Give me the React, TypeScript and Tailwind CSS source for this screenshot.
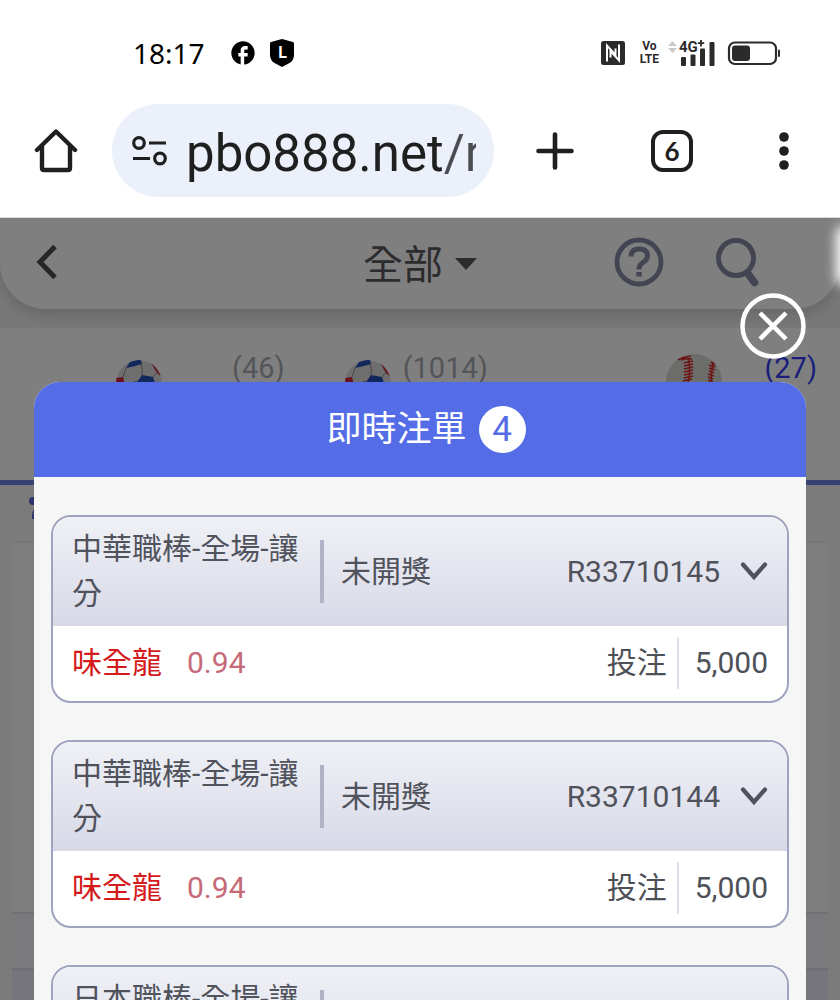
import { useId } from 'react';
import { MdFacebook } from 'react-icons/md';

interface Bet {
  id: string;
  market: string;
  status: string;
  team: string;
  odds: string;
  stake: string;
}

const bets: Bet[] = [
  { id: 'R33710145', market: '中華職棒-全場-讓分', status: '未開獎', team: '味全龍', odds: '0.94', stake: '5,000' },
  { id: 'R33710144', market: '中華職棒-全場-讓分', status: '未開獎', team: '味全龍', odds: '0.94', stake: '5,000' },
  { id: 'R33710143', market: '日本職棒-全場-讓分', status: '未開獎', team: '味全龍', odds: '0.94', stake: '5,000' },
];

function ShieldIcon() {
  return (
    <svg viewBox="0 0 26 30" className="w-[26px] h-[30px]">
      <path d="M13 1 L24 4 Q25 4.300 25 5.500 V17 Q25 22 20.500 25 L13 29 L5.500 25 Q1 22 1 17 V5.500 Q1 4.300 2 4 Z" fill="#000" />
      <text x="13.500" y="20" fontSize="16" fontWeight="700" fill="#fff" textAnchor="middle" fontFamily="Roboto, sans-serif">L</text>
    </svg>
  );
}

function NfcIcon() {
  return (
    <svg viewBox="0 0 24 24" className="w-6 h-6">
      <rect x="0" y="0" width="24" height="24" rx="2.500" fill="#2b2b2b" />
      <path d="M6 20.500 V4.500 L14.500 14 V7.500" fill="none" stroke="#fff" strokeWidth="2" />
      <path d="M18 3.500 V19.500 L9.500 10 V16.500" fill="none" stroke="#fff" strokeWidth="2" />
    </svg>
  );
}

function SignalIcon() {
  return (
    <svg viewBox="0 0 48 28" className="w-12 h-7">
      <path d="M1 7 L5.500 2 L10 7 Z M1 9 L5.500 14 L10 9 Z" fill="#c9c9c9" />
      <g fill="#2b2b2b">
        <rect x="14" y="18" width="5" height="9" rx="1" />
        <rect x="23.500" y="15.500" width="5" height="11.500" rx="1" />
        <rect x="33" y="9.500" width="5" height="17.500" rx="1" />
        <rect x="42.500" y="3" width="5" height="24" rx="1" />
      </g>
      <text x="12" y="13" fontSize="15" fontWeight="700" fill="#2b2b2b" fontFamily="Roboto, sans-serif">4G</text>
      <path d="M34 1 V7.500 M30.800 4.200 H37.200" stroke="#2b2b2b" strokeWidth="1.800" />
    </svg>
  );
}

function BatteryIcon() {
  return (
    <svg viewBox="0 0 54 26" className="w-[54px] h-[26px]">
      <rect x="2" y="2.500" width="47" height="21.500" rx="6" fill="none" stroke="#2b2b2b" strokeWidth="2.200" />
      <rect x="5" y="5.500" width="18" height="15.500" rx="3" fill="#2b2b2b" />
      <rect x="51" y="9.500" width="2" height="7.500" rx="1" fill="#2b2b2b" />
    </svg>
  );
}

function SoccerBall() {
  const clip = useId();
  return (
    <svg viewBox="0 0 46 46" className="w-[46px] h-[46px]">
      <clipPath id={clip}><circle cx="23" cy="23" r="23" /></clipPath>
      <g clipPath={`url(#${clip})`}>
        <circle cx="23" cy="23" r="23" fill="#dcdcdc" />
        <path d="M10 8 L14 2 L20 0 H25 L26 4 L17 6.500 Z" fill="#2450b8" />
        <path d="M26 15 L37 17 L40 26 L30 32 L21 22 Z" fill="#2450b8" />
        <path d="M35 3 Q41 7 45 16 Q41 14 39 10 Q37 6 35 3 Z" fill="#d0343c" />
        <path d="M0 18 L7 17 L9 25 L4 34 L0 30 Z" fill="#d0223c" />
        <path d="M10 8 L7 17 M25 4 Q27 9 26 15 M37 17 L41 12 M9 25 L21 21" stroke="#8e8e8e" strokeWidth="1" fill="none" />
      </g>
    </svg>
  );
}

function BaseBall() {
  return (
    <svg viewBox="0 0 56 56" className="w-14 h-14">
      <circle cx="28" cy="28" r="28" fill="#d8d8d4" />
      <path d="M12 6 Q17 3 25 2 M15 6 Q20 4 26 5 M18 9 L27 7 M18 12 L27 10 M18 15 L27 13 M18 18 L27 16 M18 21 L27 19 M18 24 L27 22 M17 27 L26 25" stroke="#d8282c" strokeWidth="1.600" fill="none" />
      <path d="M22 4 Q25 14 22 30 M47 8 Q45 18 45 30" stroke="#d8282c" strokeWidth="1.400" fill="none" />
      <path d="M45 8 L49 11 M43 11 L49 13 M43 14 L49 16 M43 17 L48 19 M42 20 L48 22 M42 23 L47 25 M42 26 L47 28" stroke="#d8282c" strokeWidth="1.600" fill="none" />
    </svg>
  );
}

function StatusBar() {
  return (
    <div className="flex items-center h-7 pl-[133px] pr-[59px]">
      <span className="font-['Noto_Sans'] text-[28px] leading-7">18:17</span>
      <MdFacebook className="ml-6 w-[28px] h-[28px]" />
      <span className="ml-3"><ShieldIcon /></span>
      <div className="ml-auto flex items-center">
        <NfcIcon />
        <span className="ml-[15px] flex flex-col items-center text-[12px] leading-[13px] font-bold text-[#2b2b2b]">
          <span>Vo</span>
          <span>LTE</span>
        </span>
        <span className="ml-2"><SignalIcon /></span>
        <span className="ml-3"><BatteryIcon /></span>
      </div>
    </div>
  );
}

function BrowserBar() {
  return (
    <div className="flex items-center mt-[37px] pl-[34px] pr-[35px]">
      <button type="button" aria-label="首頁" className="shrink-0">
        <svg viewBox="0 0 44 44" className="w-11 h-11" fill="none" stroke="#1f1f1f" strokeWidth="4.400" strokeLinecap="round" strokeLinejoin="round">
          <path d="M3 21 L22 2.500 L41 21" />
          <path d="M8 18 V39 Q8 41 10 41 H34 Q36 41 36 39 V18" />
        </svg>
      </button>
      <div className="ml-[34px] flex-1 min-w-0 flex items-center h-[93px] rounded-full bg-[#ebf0fa] pl-5 pr-[18px]">
        <svg viewBox="0 0 36 32" className="w-9 h-8 shrink-0" fill="none" stroke="#1f1f1f" strokeWidth="3.200">
          <circle cx="7" cy="8" r="5.300" />
          <path d="M17 8 H34 M1 23.500 H18" />
          <circle cx="28" cy="23.500" r="5.300" />
        </svg>
        <input
          type="text"
          aria-label="網址"
          readOnly
          value="pbo888.net/r"
          className="ml-[18px] flex-1 min-w-0 h-[70px] pt-1.5 text-[51px] leading-[64px] text-transparent bg-clip-text bg-linear-to-r from-[#1f1f1f] from-[258px] to-[#4a4c52] to-[258px] outline-none"
        />
      </div>
      <button type="button" aria-label="新增分頁" className="ml-10 shrink-0">
        <svg viewBox="0 0 42 42" className="w-[42px] h-[42px]" stroke="#1f1f1f" strokeWidth="4.600" strokeLinecap="round">
          <path d="M21 4.500 V37.500 M4.500 21 H37.500" />
        </svg>
      </button>
      <button type="button" className="ml-[75px] shrink-0 w-[42px] h-[42px] rounded-xl border-4 border-[#1f1f1f] font-[Lato] text-[26px] leading-none font-bold text-[#1f1f1f]">
        6
      </button>
      <button type="button" aria-label="更多" className="ml-[70px] shrink-0">
        <svg viewBox="0 0 42 42" className="w-[42px] h-[42px]" fill="#1f1f1f">
          <circle cx="21" cy="7" r="4.800" />
          <circle cx="21" cy="21" r="4.800" />
          <circle cx="21" cy="35" r="4.800" />
        </svg>
      </button>
    </div>
  );
}

function LobbyPage() {
  return (
    <div className="h-full flex flex-col bg-[#f6f6f6]">
      <div className="bg-[#f0f0f0] pb-[19px]">
        <div className="relative flex items-center justify-center h-[91px] px-9 pb-1 rounded-b-[46px] bg-white shadow-[0_6px_14px_rgba(0,0,0,0.14)]">
          <button type="button" aria-label="返回" className="mr-auto">
            <svg viewBox="0 0 22 36" className="w-[22px] h-9" fill="none" stroke="#4c4c52" strokeWidth="5">
              <path d="M19 2.500 L4 18 L19 33.500" />
            </svg>
          </button>
          <button type="button" className="absolute top-6 inset-x-0 mx-auto w-fit flex items-center text-[40px] leading-[48px] text-[#58585f]">
            全部
            <svg viewBox="0 0 22 16" className="ml-3 w-[22px] h-4" fill="#58585f"><path d="M0 0 H22 L11 12 Z" /></svg>
          </button>
          <button type="button" aria-label="說明" className="mr-[51px]">
            <svg viewBox="0 0 50 50" className="w-[50px] h-[50px]" fill="none" stroke="#868ba6">
              <circle cx="25" cy="25" r="22" strokeWidth="4.800" />
              <path d="M17 19.500 Q17 12 25 12 Q33.500 12 33.500 19 Q33.500 22.500 29 25.500 Q25 28 25 32.500" strokeWidth="5" />
              <path d="M25 35 V39.500" strokeWidth="5.500" />
            </svg>
          </button>
          <button type="button" aria-label="搜尋" className="mr-[43px]">
            <svg viewBox="0 0 46 50" className="w-[46px] h-[50px]" fill="none" stroke="#868ba6">
              <circle cx="21" cy="21" r="17.500" strokeWidth="5" />
              <path d="M32.500 36 L39.500 45.500" strokeWidth="7.500" strokeLinecap="round" />
            </svg>
          </button>
        </div>
      </div>
      <div className="flex items-start h-[157px] pt-[26px] pl-[116px] border-b-[5px] border-[#6f83e4] bg-white text-[29px] leading-7 text-[#a8aab2]">
        <span className="mt-1.5"><SoccerBall /></span>
        <span className="ml-[70px]">(46)</span>
        <span className="ml-[60px] mt-1.5"><SoccerBall /></span>
        <span className="ml-[12px]">(1014)</span>
        <span className="ml-auto"><BaseBall /></span>
        <span className="ml-[42px] mr-[23px] text-[#343cf4]">(27)</span>
      </div>
      <div className="h-14 shrink-0 pl-7 pt-3">
        <svg viewBox="0 0 24 28" className="w-6 h-7" fill="#5667d8">
          <circle cx="5" cy="4" r="4" />
          <path d="M9 8 Q3 14 4 22 H16 V8 Z" />
        </svg>
      </div>
      <div className="flex-1 mx-3 flex flex-col border-t-2 border-[#ececec] bg-[#fdfdfd]">
        <div className="flex-1" />
        <div className="h-14 border-t-2 border-[#e2e3ea] bg-[#f4f5fb]" />
        <div className="h-8 border-t-2 border-[#dcdde8] bg-[#eaebf6]" />
      </div>
    </div>
  );
}

function BetCard({ bet }: { bet: Bet }) {
  return (
    <li className="shrink-0 rounded-[20px] border-2 border-[#9fa3bf] bg-white overflow-hidden">
      <div className="flex items-center px-[19px] pt-[9px] pb-[10px] bg-linear-to-b from-[#f0f1f6] to-[#d7d9e7] text-[#50525c]">
        <span className="w-[248px] shrink-0 leading-[45px]">{bet.market}</span>
        <span className="w-1 h-[63px] bg-[#b0b3c5]" />
        <span className="ml-[17px]">{bet.status}</span>
        <span className="ml-auto">{bet.id}</span>
        <button type="button" aria-label="展開" className="ml-5">
          <svg viewBox="0 0 28 20" className="w-7 h-5" fill="none" stroke="#50525c" strokeWidth="4.200" strokeLinecap="round">
            <path d="M3 3.500 L14 16 L25 3.500" />
          </svg>
        </button>
      </div>
      <div className="flex items-center h-[75px] px-[19px] pb-0.5 text-[#4e5058]">
        <span className="text-[#d41a1a]">{bet.team}</span>
        <span className="ml-[25px] text-[#c66a78]">{bet.odds}</span>
        <span className="ml-auto">投注</span>
        <span className="ml-[10px] w-0.5 h-[52px] bg-[#dfe0ea]" />
        <span className="ml-4">{bet.stake}</span>
      </div>
    </li>
  );
}

function BetSlipDialog() {
  return (
    <div className="absolute inset-0 flex flex-col px-[34px] pt-[75px] bg-black/50">
      <button type="button" aria-label="關閉" className="self-end mb-[23px]">
        <svg viewBox="0 0 66 66" className="w-[66px] h-[66px]" fill="none" stroke="#fff">
          <circle cx="33" cy="33" r="30.500" strokeWidth="4.500" />
          <path d="M20 20 L46 46 M46 20 L20 46" strokeWidth="4.500" />
        </svg>
      </button>
      <section className="flex-1 min-h-0 flex flex-col rounded-t-[26px] overflow-hidden bg-[#f6f6f7]">
        <h2 className="flex items-center justify-center gap-3 h-[95px] shrink-0 pl-3 bg-[#546de6] text-[35px] leading-[48px] text-white">
          即時注單
          <span className="w-[47px] h-[47px] rounded-full bg-white text-center text-[#546de6]">4</span>
        </h2>
        <ul className="flex-1 min-h-0 flex flex-col gap-[37px] overflow-hidden px-[17px] pt-[38px] text-[30px] leading-[45px]">
          {bets.map(bet => <BetCard key={bet.id} bet={bet} />)}
        </ul>
      </section>
    </div>
  );
}

export default function App() {
  return (
    <div className="h-screen flex flex-col overflow-hidden bg-white font-[Roboto,'Noto_Sans_CJK_TC',sans-serif]">
      <header className="shrink-0 pt-[39px] pb-5 border-b border-[#d9d9d9]">
        <StatusBar />
        <BrowserBar />
      </header>
      <main className="relative flex-1 min-h-0 overflow-hidden">
        <LobbyPage />
        <BetSlipDialog />
        <div className="absolute top-2 -right-3 w-4 h-[60px] rounded-full bg-white blur-[6px]" />
      </main>
    </div>
  );
}
